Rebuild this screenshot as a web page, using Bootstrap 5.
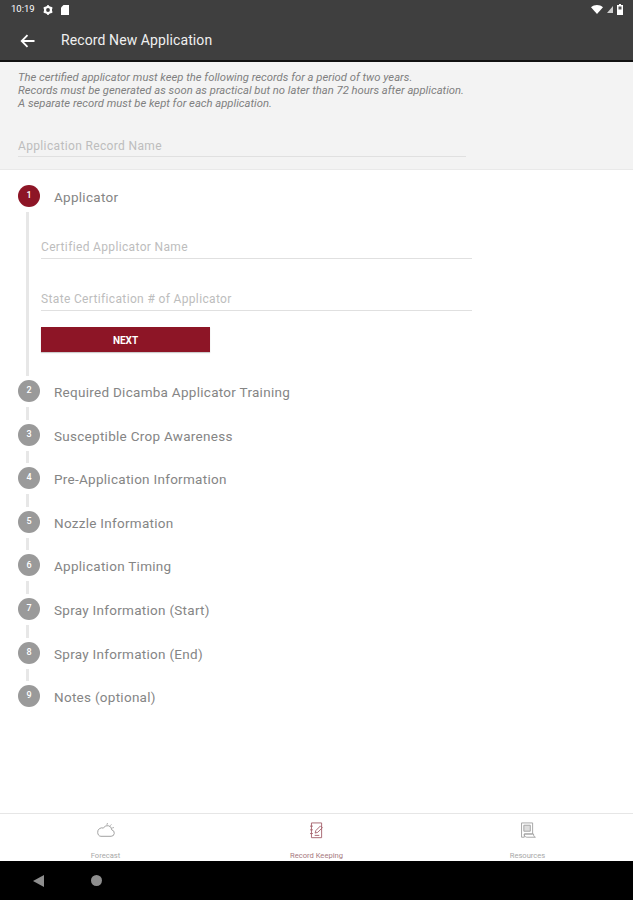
<!DOCTYPE html>
<html lang="en">
<head>
  <meta charset="UTF-8">
  <meta name="viewport" content="width=device-width, initial-scale=1">
  <title>Record New Application</title>
  <link href="https://cdn.jsdelivr.net/npm/bootstrap@5.3.0/dist/css/bootstrap.min.css" rel="stylesheet">
  <style>
    html, body { height: 100%; }
    body { font-family: Roboto, sans-serif; background: #fff; color: #757575; overflow: hidden; }
    .app-shell { height: 900px; }
    .status-row { height: 19px; background: #3f3f3f; color: #fff; font-size: 9.5px; padding: 0 10px 0 11px; }
    .app-bar { height: 43px; background: #3f3f3f; border-bottom: 2px solid #111; color: #f0f0f0; font-size: 14px; letter-spacing: .1px; padding: 2px 0 0 20px; gap: 26px; }
    .intro-box { height: 108px; background: #f3f3f3; border-bottom: 1px solid #e9e9e9; padding: 9px 167px 0 18px; }
    .intro-text { font-size: 11.25px; line-height: 13.2px; font-style: italic; color: #808080; margin: 0; white-space: nowrap; }
    .line-input.form-control { font-family: Roboto, sans-serif; background: transparent; border: 0; border-bottom: 1px solid #e0e0e0; border-radius: 0; box-shadow: none; padding: 0 0 4px; font-size: 12px; height: 20px; letter-spacing: .35px; }
    .line-input::placeholder { color: #bdbdbd; opacity: 1; }
    .line-input.intro-input { margin-top: 28px; height: 18px; padding-bottom: 2px; }
    .step-list { padding: 15px 0 0 18px; }
    .step-item { min-height: 43.6px; gap: 14px; }
    .step-marker { width: 22px; flex: none; }
    .step-dot { width: 22px; height: 22px; border-radius: 50%; background: #9a9a9a; color: #fff; font-size: 9px; font-weight: 500; }
    .step-item.is-active .step-dot { background: #8d1526; }
    .step-line { flex: 1; width: 3px; background: #e7e7e7; margin: 5px 0 4px 8px; }
    .step-title { font-size: 13.5px; line-height: 22px; padding-top: 1px; letter-spacing: .28px; color: #858585; }
    .step-body { width: 431px; margin: 0 0 28px -13px; }
    .step-body .line-input { margin-top: 32px; }
    .step-body .line-input:first-child { margin-top: 31px; }
    .step-btn.btn { width: 169px; height: 25px; margin-top: 16px; padding: 1px 0 0; border: 0; border-radius: 0; background: #8d1526; color: #fff; font-size: 10px; font-weight: 700; display: block; box-shadow: 0 1px 1px rgba(0,0,0,.2); }
    .bottom-tabs { height: 48px; border-top: 1px solid #e6e6e6; }
    .tab-cell { font-size: 7.6px; color: #a8a8a8; padding-top: 8px; height: 47px; }
    .tab-cell svg { margin-bottom: 11px; }
    .tab-cell.is-current { color: #a87a80; }
    .nav-strip { height: 39px; background: #000; padding-left: 33px; gap: 46px; }
  </style>
</head>
<body>
  <div class="app-shell d-flex flex-column">
    <!-- status bar -->
    <div class="status-row d-flex align-items-center">
      <span class="me-2">10:19</span>
      <svg class="me-2" width="10" height="10" viewBox="0 0 10 10"><circle cx="5" cy="5" r="3" fill="none" stroke="#fff" stroke-width="2.2"/><path d="M5 0v2M5 8v2M.7 2.5l1.7 1M7.6 6.5l1.7 1M.7 7.5l1.7-1M7.6 3.5l1.7-1" stroke="#fff" stroke-width="1.6"/></svg>
      <svg width="8" height="10" viewBox="0 0 8 10"><path d="M2.5 0H8v10H0V2.5z" fill="#fff"/></svg>
      <svg class="ms-auto" width="12" height="9" viewBox="0 0 12 9"><path d="M0 2.2C3.4-.7 8.6-.7 12 2.2L6 9z" fill="#fff"/></svg>
      <svg class="ms-1" width="6" height="7" viewBox="0 0 6 7"><path d="M6 0v7H0z" fill="#cfcfcf"/></svg>
      <svg class="ms-1" width="6" height="11" viewBox="0 0 6 11"><path d="M2 0h2v1h2v10H0V1h2z" fill="#fff"/><rect x="1.5" y="2.5" width="3" height="3" fill="#555"/></svg>
    </div>
    <!-- app bar -->
    <div class="app-bar d-flex align-items-center">
      <svg width="15" height="14" viewBox="0 0 15 14"><path d="M14.5 7H2M7.5 1.2 1.7 7l5.8 5.8" fill="none" stroke="#fff" stroke-width="1.8"/></svg>
      <span>Record New Application</span>
    </div>
    <!-- intro -->
    <div class="intro-box">
      <p class="intro-text">The certified applicator must keep the following records for a period of two years.<br>Records must be generated as soon as practical but no later than 72 hours after application.<br>A separate record must be kept for each application.</p>
      <input class="form-control line-input intro-input" type="text" placeholder="Application Record Name">
    </div>
    <!-- stepper -->
    <div class="step-list flex-grow-1">
      <div class="step-item is-active d-flex">
        <div class="step-marker d-flex flex-column">
          <div class="step-dot d-flex align-items-center justify-content-center">1</div>
          <div class="step-line"></div>
        </div>
        <div>
          <div class="step-title">Applicator</div>
          <div class="step-body">
            <input class="form-control line-input" type="text" placeholder="Certified Applicator Name">
            <input class="form-control line-input" type="text" placeholder="State Certification # of Applicator">
            <button class="btn step-btn" type="button">NEXT</button>
          </div>
        </div>
      </div>
      <div id="restSteps"></div>
    </div>
    <!-- bottom tabs -->
    <div class="bottom-tabs row g-0">
      <div class="col-4 tab-cell d-flex flex-column align-items-center">
        <svg width="20" height="18" viewBox="0 0 20 18" fill="none" stroke="#9a9a9a" stroke-width="1"><path d="M4.5 15.5h11a3.5 3.5 0 0 0 .8-6.9A4.8 4.8 0 0 0 7.2 6.6 4.6 4.6 0 0 0 1 11.2c0 2.5 1.500 4.300 3.500 4.300z"/><path d="M11 3l.6-1.800M14.500 4l1.300-1.300M16.800 6.500l1.700-.5"/></svg>
        <span>Forecast</span>
      </div>
      <div class="col-4 tab-cell is-current d-flex flex-column align-items-center">
        <svg width="20" height="18" viewBox="0 0 20 18" fill="none" stroke="#a5626c" stroke-width="1"><path d="M4 1h11v16H4z"/><path d="M2.500 4.500h3M2.500 8.500h3M2.500 12.500h3"/><path d="M8 12l.8-2.800 5-5 2 2-5 5zM7.500 14.500h5"/></svg>
        <span>Record Keeping</span>
      </div>
      <div class="col-4 tab-cell d-flex flex-column align-items-center">
        <svg width="20" height="18" viewBox="0 0 20 18" fill="none" stroke="#a2a2a2" stroke-width="1"><path d="M3 1h12v12H6v3.500H3z"/><path d="M5.500 3.500h7v6.500h-7z" fill="#ddd"/><path d="M6 13.500c0 2.500 2 3 3 3h9c-1.500-.5-2-1.500-2-3.500H6z"/></svg>
        <span>Resources</span>
      </div>
    </div>
    <!-- android nav -->
    <div class="nav-strip d-flex align-items-center">
      <svg width="12" height="12" viewBox="0 0 12 12"><path d="M11 0v12L0 6z" fill="#8e8e8e"/></svg>
      <svg width="11" height="11" viewBox="0 0 11 11"><circle cx="5.500" cy="5.500" r="5.500" fill="#8e8e8e"/></svg>
    </div>
  </div>

  <script src="https://cdn.jsdelivr.net/npm/bootstrap@5.3.0/dist/js/bootstrap.bundle.min.js"></script>
  <script>
    // remaining collapsed steps
    const steps = ['Required Dicamba Applicator Training', 'Susceptible Crop Awareness', 'Pre-Application Information', 'Nozzle Information', 'Application Timing', 'Spray Information (Start)', 'Spray Information (End)', 'Notes (optional)'];
    document.getElementById('restSteps').innerHTML = steps.map((title, i) => `
      <div class="step-item d-flex">
        <div class="step-marker d-flex flex-column">
          <div class="step-dot d-flex align-items-center justify-content-center">${i + 2}</div>
          ${i < steps.length - 1 ? '<div class="step-line"></div>' : ''}
        </div>
        <div class="step-title">${title}</div>
      </div>`).join('');
  </script>
</body>
</html>
